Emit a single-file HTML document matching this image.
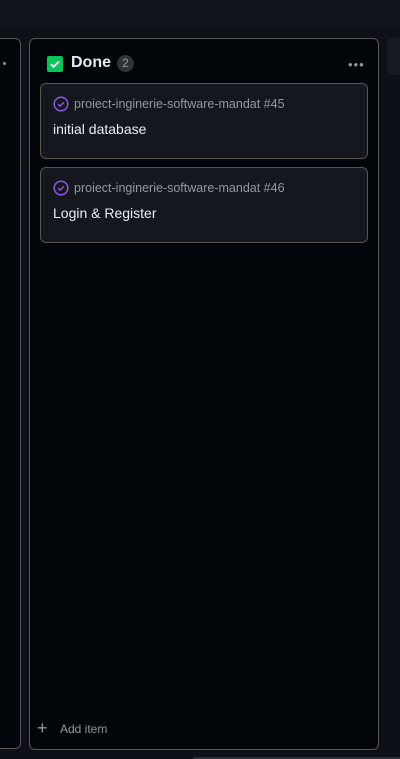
<!DOCTYPE html>
<html><head><style>
body{margin:0;width:400px;height:759px;background:#0d1117;position:relative;overflow:hidden;font-family:"Liberation Sans",sans-serif}
.top{position:absolute;left:0;top:0;width:400px;height:30px;background:#0f131a}
.col{position:absolute;background:#010409;border:1px solid #5a564f;border-radius:6px}
.card{position:absolute;left:40px;width:326px;height:74px;background:#14181e;border:1px solid #5a564f;border-radius:6px}
.meta{position:absolute;left:12px;top:12px;font-size:12.5px;color:#9198a1;display:flex;align-items:center;gap:5px}
.title{position:absolute;left:12px;top:37px;font-size:14px;color:#e6edf3}
</style></head><body>
<div class="top"></div>
<div class="col" style="left:-10px;top:38px;width:29px;height:709px"></div>
<div style="position:absolute;left:3px;top:62px;width:3px;height:3px;border-radius:50%;background:#9198a1"></div>
<div class="col" style="left:29px;top:38px;width:348px;height:710px"></div>
<div style="position:absolute;left:387px;top:38px;width:20px;height:37px;background:#161b22;border-radius:6px"></div>
<div style="position:absolute;left:47px;top:56px;width:16px;height:16px;background:#08c45a;border-radius:2px"><svg width="16" height="16" viewBox="0 0 16 16"><path d="M4 8.3l2.6 2.5L12 5.5" stroke="#fff" stroke-width="1.8" fill="none"/></svg></div>
<div style="position:absolute;left:71px;top:54px;font-size:16px;font-weight:bold;color:#e6edf3">Done</div>
<div style="position:absolute;left:117px;top:55px;width:17px;height:17px;border-radius:9px;background:#2f3338;color:#9198a1;font-size:12px;text-align:center;line-height:17px">2</div>
<div style="position:absolute;left:348px;top:57px;color:#9198a1;font-size:13px;letter-spacing:1px">•••</div>
<div class="card" style="top:83px"><div class="meta"><svg width="16" height="16" viewBox="0 0 16 16"><circle cx="8" cy="8" r="6.8" stroke="#8957e5" stroke-width="1.5" fill="none"/><path d="M5.2 8.2l1.9 1.9 3.7-3.7" stroke="#8957e5" stroke-width="1.5" fill="none"/></svg>proiect-inginerie-software-mandat #45</div><div class="title">initial database</div></div>
<div class="card" style="top:167px"><div class="meta"><svg width="16" height="16" viewBox="0 0 16 16"><circle cx="8" cy="8" r="6.8" stroke="#8957e5" stroke-width="1.5" fill="none"/><path d="M5.2 8.2l1.9 1.9 3.7-3.7" stroke="#8957e5" stroke-width="1.5" fill="none"/></svg>proiect-inginerie-software-mandat #46</div><div class="title">Login &amp; Register</div></div>
<div style="position:absolute;left:37px;top:720px;color:#9198a1;font-size:18px;line-height:16px">+</div>
<div style="position:absolute;left:60px;top:722px;color:#9198a1;font-size:12px">Add item</div>
<div style="position:absolute;left:193px;top:757px;width:207px;height:2px;background:#2a2f36"></div>
</body></html>
